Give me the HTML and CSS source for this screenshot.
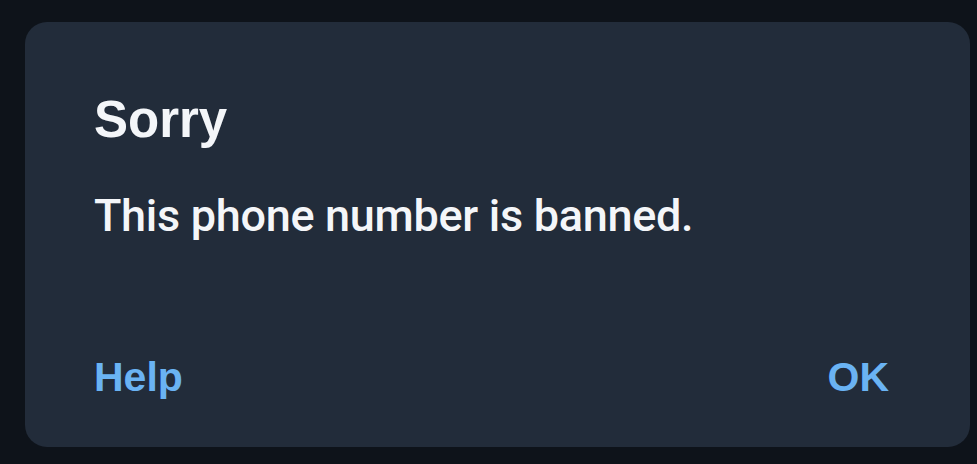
FILE: index.html
```html
<!DOCTYPE html>
<html>
<head>
<meta charset="utf-8">
<link rel="stylesheet" href="styles.css">
</head>
<body>
<div class="dialog">
  <div class="title">Sorry</div>
  <div class="message">This phone number is banned.</div>
  <div class="actions">
    <span class="btn">Help</span>
    <span class="btn">OK</span>
  </div>
</div>
</body>
</html>
```
FILE: styles.css
```css
html, body {
  margin: 0;
  height: 100%;
}
body {
  background: #0e131a;
  padding: 22px 7px 17px 25px;
  box-sizing: border-box;
  font-family: Roboto, "Liberation Sans", sans-serif;
}
.dialog {
  background: #222c3a;
  border-radius: 22px;
  height: 100%;
  box-sizing: border-box;
  padding: 70px 81px 0 69px;
  display: flex;
  flex-direction: column;
}
.title {
  color: #f4f6f9;
  font-family: "Liberation Sans", Arial, sans-serif;
  font-weight: 700;
  font-size: 51px;
  line-height: 56px;
}
.message {
  color: #f4f6f9;
  font-size: 45px;
  font-weight: 500;
  letter-spacing: -0.3px;
  line-height: 52px;
  margin-top: 42px;
}
.actions {
  display: flex;
  justify-content: space-between;
  margin-top: 113px;
}
.btn {
  color: #6ab3f3;
  font-family: "Liberation Sans", Arial, sans-serif;
  font-weight: 700;
  font-size: 41px;
  line-height: 44px;
}
```
